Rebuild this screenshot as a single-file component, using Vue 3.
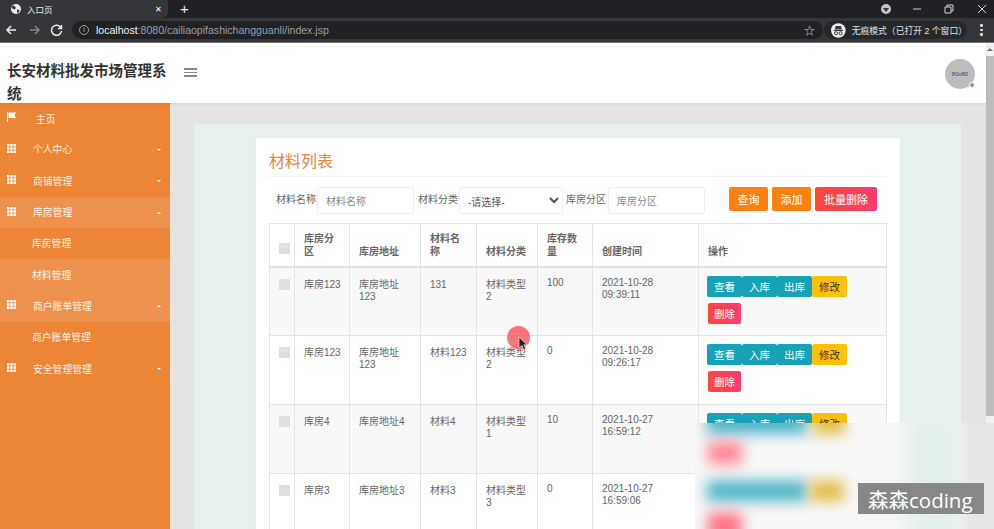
<script setup>
const menus = [
  { name: '主页', icon: 'flag' },
  { name: '个人中心', icon: 'grid', caret: 'down' },
  { name: '商铺管理', icon: 'grid', caret: 'down' },
  { name: '库房管理', icon: 'grid', caret: 'up', light: true },
  { name: '库房管理', sub: true },
  { name: '材料管理', sub: true, light: true },
  { name: '商户账单管理', icon: 'grid', caret: 'up', light: true },
  { name: '商户账单管理', sub: true },
  { name: '安全管理管理', icon: 'grid', caret: 'down' }
]

const heads = ['库房分区', '库房地址', '材料名称', '材料分类', '库存数量', '创建时间', '操作']

const rows = [
  { area: '库房123', addr: '库房地址123', name: '131', type: '材料类型2', num: '100', time: '2021-10-28 09:39:11' },
  { area: '库房123', addr: '库房地址123', name: '材料123', type: '材料类型2', num: '0', time: '2021-10-28 09:26:17' },
  { area: '库房4', addr: '库房地址4', name: '材料4', type: '材料类型1', num: '10', time: '2021-10-27 16:59:12' },
  { area: '库房3', addr: '库房地址3', name: '材料3', type: '材料类型3', num: '0', time: '2021-10-27 16:59:06' }
]
</script>

<template>
  <div class="screen">
    <div class="tabbar">
      <div class="tab">
        <svg class="globe" viewBox="0 0 10 10" width="10" height="10">
          <circle cx="5" cy="5" r="5" fill="#e8eaed" />
          <path d="M2 1.500l2 1 1 1.500-1.500 1.500-2-1-1-1zM6 5.500l2.500.5-1 2.500-1.500.5z" fill="#35363a" />
        </svg>
        <span class="tab-title">入口页</span>
        <span class="tab-close">✕</span>
      </div>
      <span class="tab-new">+</span>
      <div class="win-btns">
        <span class="profile-dot"><i></i></span>
        <svg viewBox="0 0 75 10" width="75" height="10" fill="none" stroke="#d5d6d8" stroke-width="1">
          <path d="M0 5h8M32 3h6v6h-6zM34 3V1h6v6h-2M65 1l8 8M73 1l-8 8" />
        </svg>
      </div>
    </div>
    <div class="toolbar">
      <svg class="nav" viewBox="0 0 58 12" width="58" height="12" fill="none" stroke-width="1.500">
        <path d="M11 6H2M6 2L2 6l4 4" stroke="#e8eaed" />
        <path d="M25 6h9M30 2l4 4-4 4" stroke="#85878a" />
        <path d="M56 4a5 5 0 1 0 .500 3M56.500 1v3.500H53" stroke="#e8eaed" />
      </svg>
      <div class="url">
        <span class="info">i</span>
        <span class="host">localhost</span><span class="path">:8080/cailiaopifashichangguanli/index.jsp</span>
        <span class="star">☆</span>
      </div>
      <div class="incognito">
        <svg viewBox="0 0 16 16" width="15" height="15">
          <circle cx="8" cy="8" r="8" fill="#e8eaed" />
          <path d="M4 7l1.200-4h5.600L12 7zM3 7.500h10v1H3z" fill="#35363a" />
          <circle cx="5.500" cy="11" r="1.700" fill="none" stroke="#35363a" />
          <circle cx="10.500" cy="11" r="1.700" fill="none" stroke="#35363a" />
        </svg>
        <span>无痕模式（已打开 2 个窗口）</span>
      </div>
      <div class="kebab"><i></i><i></i><i></i></div>
    </div>

    <div class="page">
      <div class="main">
        <header class="topbar">
          <h1 class="brand">长安材料批发市场管理系统</h1>
          <div class="burger"><i></i><i></i><i></i></div>
          <div class="avatar">80x80<span class="online"></span></div>
        </header>

        <div class="body">
          <aside class="sidebar">
            <div
              v-for="(m, i) in menus"
              :key="i"
              class="menu-item"
              :class="{ light: m.light, sub: m.sub, home: m.icon === 'flag' }"
            >
              <svg v-if="m.icon === 'flag'" class="m-icon" viewBox="0 0 9 10" width="9" height="10">
                <path d="M0 0h1v10H0zM1.500.500h7.500L7.500 3.200 9 6H1.500z" fill="#fff" />
              </svg>
              <svg v-else-if="m.icon === 'grid'" class="m-icon" viewBox="0 0 9 9" width="9" height="9" fill="#fff">
                <path d="M0 0h2.500v2.500H0zM3.250 0h2.500v2.500h-2.500zM6.500 0H9v2.500H6.500zM0 3.250h2.500v2.500H0zM3.250 3.250h2.500v2.500h-2.500zM6.500 3.250H9v2.500H6.500zM0 6.500h2.500V9H0zM3.250 6.500h2.500V9h-2.500zM6.500 6.500H9V9H6.500z" />
              </svg>
              <span class="m-text">{{ m.name }}</span>
              <span v-if="m.caret" class="caret" :class="m.caret"></span>
            </div>
          </aside>

          <main class="content">
            <div class="panel">
              <section class="card">
                <h2 class="card-title">材料列表</h2>
                <div class="search">
                  <label>材料名称</label>
                  <input class="field f1" placeholder="材料名称" />
                  <label>材料分类</label>
                  <select class="field f2"><option>-请选择-</option></select>
                  <label>库房分区</label>
                  <input class="field f3" placeholder="库房分区" />
                  <div class="search-btns">
                    <button class="btn orange">查询</button>
                    <button class="btn orange">添加</button>
                    <button class="btn danger wide">批量删除</button>
                  </div>
                </div>

                <table class="grid">
                  <colgroup>
                    <col style="width:25px" /><col style="width:55px" /><col style="width:71px" /><col style="width:56px" />
                    <col style="width:61px" /><col style="width:55px" /><col style="width:106px" /><col style="width:188px" />
                  </colgroup>
                  <thead>
                    <tr>
                      <th class="check-cell"><span class="check"></span></th>
                      <th v-for="h in heads" :key="h">{{ h }}</th>
                    </tr>
                  </thead>
                  <tbody>
                    <tr v-for="(r, i) in rows" :key="i">
                      <td class="check-cell"><span class="check"></span></td>
                      <td>{{ r.area }}</td>
                      <td>{{ r.addr }}</td>
                      <td>{{ r.name }}</td>
                      <td>{{ r.type }}</td>
                      <td class="latin">{{ r.num }}</td>
                      <td class="latin">{{ r.time }}</td>
                      <td class="ops">
                        <div class="ops-line">
                          <button class="op teal">查看</button><button class="op teal">入库</button><button class="op teal">出库</button><button class="op yellow">修改</button>
                        </div>
                        <button class="op danger del">删除</button>
                      </td>
                    </tr>
                  </tbody>
                </table>
              </section>
            </div>
          </main>
        </div>
      </div>
      <div class="scrollbar"><span class="arrow"></span><div class="thumb"></div></div>
    </div>

    <!-- 录屏的鼠标标记 -->
    <div class="pointer"></div>
    <svg class="cursor" viewBox="0 0 10 15" width="10" height="15">
      <path d="M1 1v11l2.800-2.500L6 14l1.800-1-2-4.200H9z" fill="#222" stroke="#fff" stroke-width=".6" />
    </svg>

    <!-- 打码区域和水印 -->
    <div class="mosaic">
      <div class="blobs">
        <i class="blob b1"></i><i class="blob b2"></i><i class="blob b3"></i>
        <i class="blob b4"></i><i class="blob b5"></i><i class="blob b6"></i>
        <i class="blob b7"></i><i class="blob b8"></i>
      </div>
      <div class="watermark">森森coding</div>
    </div>
  </div>
</template>

<style>
html, body { margin: 0; overflow: hidden; }
</style>

<style scoped>
.screen { position: relative; width: 994px; height: 529px; overflow: hidden; display: flex; flex-direction: column; font-family: "Liberation Sans", "Noto Sans CJK SC", sans-serif; background: #fff; }

.tabbar { height: 18px; background: #202124; display: flex; align-items: center; flex-shrink: 0; }
.tab { width: 168px; height: 18px; box-sizing: border-box; padding: 0 0 0 11px; background: #35363a; border-radius: 0 0 6px 0; display: flex; align-items: center; color: #e8eaed; }
.tab-title { margin-left: 6px; font-size: 8.500px; }
.tab-close { margin-left: auto; margin-right: 6px; font-size: 8px; color: #fff; }
.tab-new { margin-left: 12px; color: #e8eaed; font-size: 15px; line-height: 18px; }
.win-btns { margin-left: auto; margin-right: 6px; display: flex; align-items: center; }
.profile-dot { width: 10px; height: 10px; border-radius: 50%; background: #c4c5c7; margin-right: 22px; display: flex; align-items: center; justify-content: center; }
.profile-dot i { border: 3px solid transparent; border-top: 4px solid #35363a; margin-top: 4px; }

.toolbar { height: 24px; background: #35363a; border-bottom: 1px solid #77787a; display: flex; align-items: center; flex-shrink: 0; }
.nav { margin-left: 5px; flex-shrink: 0; }
.url { margin-left: 9px; width: 751px; height: 18px; box-sizing: border-box; padding: 0 8px 0 7px; border-radius: 9px; background: #202124; display: flex; align-items: center; font-size: 10.550px; }
.info { width: 8px; height: 8px; border: 1px solid #9aa0a6; border-radius: 50%; font-size: 7px; line-height: 8px; text-align: center; color: #c5c7c9; margin-right: 7px; }
.host { color: #f1f3f4; }
.path { color: #9aa0a6; }
.star { margin-left: auto; color: #d5d6d8; font-size: 11px; }
.incognito { margin-left: 1px; width: 143px; height: 18px; box-sizing: border-box; padding-left: 7px; border-radius: 9px; background: #27282b; display: flex; align-items: center; gap: 6px; color: #dfe1e3; font-size: 8.800px; white-space: nowrap; }
.kebab { margin-left: 13px; display: flex; flex-direction: column; gap: 2px; }
.kebab i { width: 2.500px; height: 2.500px; border-radius: 50%; background: #e8eaed; }

.page { flex: 1; display: flex; min-height: 0; }
.main { flex: 1; display: flex; flex-direction: column; min-width: 0; }
.scrollbar { width: 8px; background: #f1f1f1; display: flex; flex-direction: column; align-items: center; }
.arrow { margin-top: 5px; border: 3px solid transparent; border-bottom: 3px solid #777; border-top: 0; }
.thumb { margin-top: 5px; width: 8px; height: 360px; background: #bdbdbd; }

.topbar { height: 60px; flex-shrink: 0; background: #fff; display: flex; align-items: center; position: relative; z-index: 1; box-shadow: 0 1px 3px rgba(0, 0, 0, .08); }
.brand { align-self: flex-start; width: 166px; margin: 17px 0 0 7px; font-size: 14.500px; line-height: 23px; font-weight: 700; color: #333; }
.burger { margin-left: 11px; display: flex; flex-direction: column; gap: 2px; margin-top: -1px; }
.burger i { width: 13px; height: 1.500px; background: #888; }
.avatar { position: relative; margin-left: auto; margin-right: 11px; margin-top: 2px; width: 30px; height: 30px; border-radius: 50%; background: #bdbdbd; color: #444; font-size: 6px; line-height: 30px; text-align: center; }
.online { position: absolute; right: 1px; bottom: 2px; width: 4px; height: 4px; border-radius: 50%; background: #5cb85c; border: 1px solid #fff; box-sizing: content-box; margin: -1px; }

.body { flex: 1; display: flex; min-height: 0; }
.sidebar { width: 170px; flex-shrink: 0; background: #ec8536; color: #fff; }
.menu-item { height: 31.300px; display: flex; align-items: center; padding: 0 9px 0 7px; font-size: 9.800px; color: #fdf1e7; }
.menu-item.light { background: #ee914f; }
.menu-item.sub { padding-left: 32px; }
.m-icon { flex-shrink: 0; margin-top: -3px; }
.m-text { margin-left: 17px; margin-top: -1px; }
.menu-item.sub .m-text { margin-left: 0; }
.menu-item.home .m-text { margin-left: 20px; margin-top: 1px; }
.caret { margin-left: auto; margin-right: 0; border: 2.500px solid transparent; }
.caret.down { border-top: 2.500px solid #fff; border-bottom: 0; }
.caret.up { border-bottom: 2.500px solid #fff; border-top: 0; }

.content { flex: 1; min-width: 0; background: #e4e4e4; padding: 21px 25px 0 24px; overflow: hidden; }
.panel { background: #e6f1ec; height: 100%; padding: 14px 61px 0 62px; box-sizing: border-box; }
.card { background: #fff; padding: 0 14px 0 13px; height: 500px; box-shadow: 0 0 3px rgba(0, 0, 0, .04); }
.card-title { margin: 0; padding-top: 13px; height: 25px; font-size: 16px; line-height: 22px; font-weight: 400; color: #f0813a; border-bottom: 1px solid #f3f3f3; }
.search { margin-top: 10px; height: 36px; display: flex; align-items: flex-start; padding-left: 7px; font-size: 10px; color: #666; }
.search label { line-height: 25px; white-space: nowrap; }
.field { height: 27px; box-sizing: border-box; border: 1px solid #eee; border-radius: 3px; background: #fff; font: inherit; color: #555; padding: 2px 8px 0; margin-left: 1px; outline: none; }
.field::placeholder { color: #8a8a8a; }
.f1 { width: 97px; margin-right: 4px; }
.f2 { width: 104px; margin-right: 3px; padding: 3px 2px 0 4px; }
.f3 { width: 97px; margin-left: 2px; }
.search-btns { margin-left: 24px; display: flex; gap: 4px; }
button { font-family: inherit; cursor: pointer; }
.btn { width: 39px; height: 24px; border: 0; border-radius: 2px; color: #fff; font-size: 11px; padding: 0; }
.btn.wide { width: 62px; }
.orange { background: #ff7f11; }
.danger { background: linear-gradient(90deg, #ff473a, #ff3a70); }

.grid { width: 617px; table-layout: fixed; border-collapse: collapse; font-size: 10px; line-height: 12px; color: #666; }
.grid th, .grid td { border: 1px solid #e3e3e3; padding: 11px 8px 0 9px; text-align: left; vertical-align: top; }
.grid th { height: 43px; box-sizing: border-box; padding: 0 8px 8px 9px; vertical-align: bottom; color: #666; font-weight: 700; line-height: 13px; border-bottom-width: 2px; }
.grid td { height: 69px; box-sizing: border-box; }
.grid tbody tr:nth-child(odd) { background: #f8f8f8; }
.grid .check-cell { padding-left: 9px; padding-right: 0; }
.check { display: block; width: 11px; height: 11px; background: #dcdfe4; }
.grid th.check-cell { padding-bottom: 12px; }
.grid td.latin { padding-top: 9px; }
.grid td.ops { padding: 8px 8px 0; }
.ops-line { display: flex; height: 21px; margin-bottom: 6px; }
.op { width: 35px; height: 21px; border: 0; padding: 0; font-size: 10.500px; color: #fff; display: block; }
.teal { background: #17a2b8; border-radius: 2px; }
.yellow { background: #ffc107; color: #333; border-radius: 2px; }
.del { margin-left: 1px; width: 33px; border-radius: 2px; }

.pointer { position: absolute; left: 507px; top: 326px; width: 23px; height: 23px; border-radius: 50%; background: rgba(255, 70, 80, .75); }
.cursor { position: absolute; left: 518px; top: 336px; }

.mosaic { position: absolute; left: 695px; top: 423px; width: 299px; height: 106px; background: #f7f7f7; overflow: hidden; }
.blobs { position: absolute; inset: 0; }
.blob { position: absolute; filter: blur(7px); }
.b1 { left: 12px; top: -14px; width: 100px; height: 25px; background: #4db4c8; }
.b2 { left: 118px; top: -14px; width: 32px; height: 25px; background: #e3bb45; }
.b3 { left: 13px; top: 19px; width: 34px; height: 22px; background: #ff8593; }
.b4 { left: 12px; top: 58px; width: 100px; height: 20px; background: #4db4c8; }
.b5 { left: 115px; top: 58px; width: 34px; height: 20px; background: #e3bb45; }
.b6 { left: 13px; top: 90px; width: 34px; height: 26px; background: #ff6f84; }
.b7 { left: 212px; top: -10px; width: 55px; height: 130px; background: #e3efe9; filter: blur(10px); }
.b8 { left: 268px; top: -10px; width: 40px; height: 130px; background: #e6e6e6; filter: blur(5px); }
.watermark { position: absolute; left: 163px; top: 60px; width: 126px; height: 31px; box-sizing: border-box; padding: 3px 0 0 10px; background: #868886; color: #fff; font-family: "Open Sans", "Noto Sans CJK SC", sans-serif; font-size: 20.500px; line-height: 28px; white-space: nowrap; }
</style>
